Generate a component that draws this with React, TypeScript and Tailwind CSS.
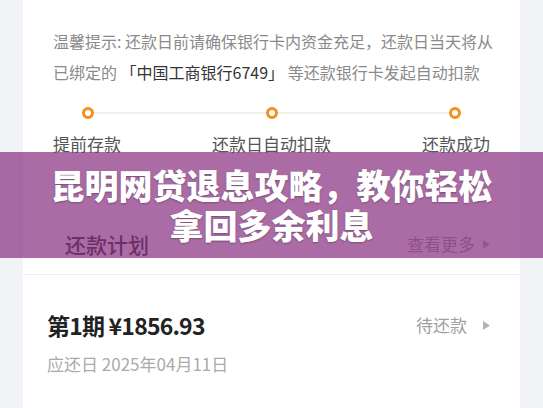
import React from "react";

const Tri = () => (
  <svg width="7" height="9" viewBox="0 0 7 9" className="block">
    <path d="M0 0 L7 4.5 L0 9 Z" fill="#b4b4b4" />
  </svg>
);

export default function App() {
  const font = { fontFamily: '"Noto Sans CJK SC", "Noto Sans", sans-serif' };
  return (
    <div
      className="relative w-[543px] h-[408px] overflow-hidden bg-[#f2f3f7] px-[23px]"
      style={font}
    >
      <div className="bg-white h-[274px] flex flex-col">
        <div className="pl-[30px] pr-[30px] pt-[26px] text-[16px] leading-[31px] text-[#8a8a8a] whitespace-nowrap">
          <div>温馨提示: 还款日前请确保银行卡内资金充足，还款日当天将从</div>
          <div>
            已绑定的 <span className="text-[#333]">「中国工商银行6749」</span> 等还款银行卡发起自动扣款
          </div>
        </div>
        <div className="mx-[30px] mt-[19px] px-[29px] flex items-center">
          <div className="w-3 h-3 rounded-full border-[3px] border-[#f39019] bg-white" />
          <div className="flex-1 h-[2px] bg-[#f0f0f0]" />
          <div className="w-3 h-3 rounded-full border-[3px] border-[#f39019] bg-white" />
          <div className="flex-1 h-[2px] bg-[#f0f0f0]" />
          <div className="w-3 h-3 rounded-full border-[3px] border-[#f39019] bg-white" />
        </div>
        <div className="mx-[30px] mt-[13px] flex justify-between text-[17px] leading-[24px] text-[#555]">
          <span>提前存款</span>
          <span>还款日自动扣款</span>
          <span>还款成功</span>
        </div>
        <div className="mt-[74px] pl-[42px] pr-[30px] flex items-center justify-between">
          <span className="text-[21px] leading-[28px] font-medium text-[#333]">还款计划</span>
          <div className="flex items-center gap-[8px] text-[17px] text-[#a0a0a0]">
            <span>查看更多</span>
            <Tri />
          </div>
        </div>
      </div>
      <div className="h-[1px] bg-[#eeeef0]" />
      <div className="bg-white h-[200px] pl-[24px] pr-[30px] pt-[35px]">
        <div className="flex items-center justify-between">
          <span className="text-[23px] leading-[30px] font-bold text-[#222] tracking-[-0.8px]">第1期 ¥1856.93</span>
          <div className="flex items-center gap-[16px] text-[17px] text-[#a0a0a0]">
            <span>待还款</span>
            <Tri />
          </div>
        </div>
        <div className="mt-[12px] text-[17px] leading-[24px] text-[#aaa]">应还日 2025年04月11日</div>
      </div>

      <div className="absolute left-0 right-0 top-[152px] h-[106px] bg-[rgba(135,45,128,0.7)] flex flex-col items-center justify-center">
        <div className="text-white text-[34px] leading-[40px] font-black whitespace-nowrap text-center [text-shadow:0_1px_2px_rgba(0,0,0,0.3)]">
          <div>昆明网贷退息攻略，教你轻松</div>
          <div>拿回多余利息</div>
        </div>
      </div>
    </div>
  );
}
